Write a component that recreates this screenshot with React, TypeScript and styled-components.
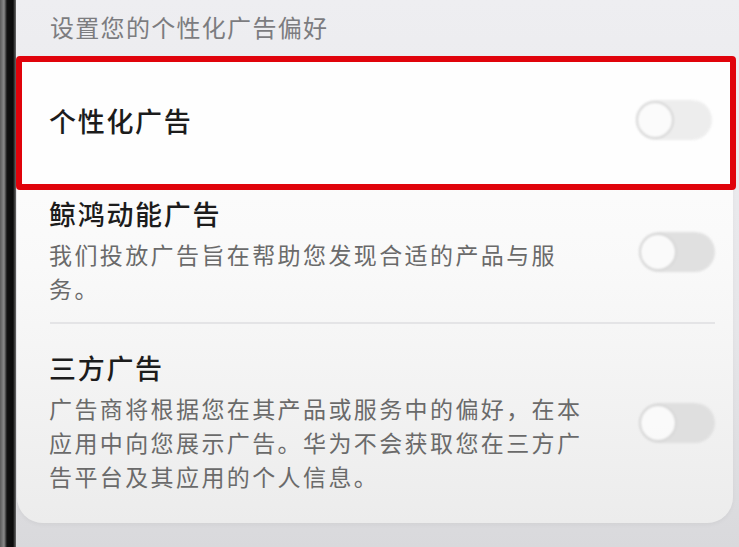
import styled, { createGlobalStyle } from "styled-components";

const GlobalStyle = createGlobalStyle`
  html, body {
    margin: 0;
    padding: 0;
    background: #dadadd;
  }
  body {
    font-family: "Noto Sans CJK SC", "Noto Sans", sans-serif;
  }
`;

type Option = {
  title: string;
  desc?: string;
};

const options: Option[] = [
  { title: "个性化广告" },
  {
    title: "鲸鸿动能广告",
    desc: "我们投放广告旨在帮助您发现合适的产品与服务。",
  },
  {
    title: "三方广告",
    desc: "广告商将根据您在其产品或服务中的偏好，在本应用中向您展示广告。华为不会获取您在三方广告平台及其应用的个人信息。",
  },
];

export default function App() {
  return (
    <>
      <GlobalStyle />
      <Page>
        <Bezel />
        <Screen>
          <Header>设置您的个性化广告偏好</Header>
          <Card>
            <HighlightRow>
              <Texts>
                <Title>{options[0].title}</Title>
              </Texts>
              <Toggle $light />
            </HighlightRow>
            <Row $top={8} $bottom={17}>
              <Texts>
                <Title>{options[1].title}</Title>
                <Desc>{options[1].desc}</Desc>
              </Texts>
              <Toggle />
            </Row>
            <Divider />
            <Row $top={28} $bottom={30}>
              <Texts>
                <Title>{options[2].title}</Title>
                <Desc>{options[2].desc}</Desc>
              </Texts>
              <Toggle />
            </Row>
          </Card>
        </Screen>
      </Page>
    </>
  );
}

const Toggle = ({ $light }: { $light?: boolean }) => (
  <Track $light={$light}>
    <Knob />
  </Track>
);

const Page = styled.div`
  width: 739px;
  height: 547px;
  display: flex;
  overflow: hidden;
`;

const Bezel = styled.div`
  width: 16px;
  flex-shrink: 0;
  background: linear-gradient(
    to right,
    #5a5a5a 0px,
    #8a8a8a 4px,
    #111 7px,
    #0a0a0a 13px,
    #6b6b6b 16px
  );
`;

const Screen = styled.div`
  flex: 1;
  display: flex;
  flex-direction: column;
  background: linear-gradient(to bottom, #eeeef1 0%, #e6e6e9 60%, #d9d9dc 100%);
  padding-right: 6px;
`;

const Header = styled.div`
  height: 56px;
  display: flex;
  align-items: center;
  padding-left: 34px;
  padding-bottom: 4px;
  box-sizing: border-box;
  font-size: 24px;
  color: #7c7c7f;
  letter-spacing: 1.3px;
`;

const Card = styled.div`
  margin-left: 1px;
  border-radius: 6px 6px 26px 26px;
  background: linear-gradient(to bottom, #ffffff 0%, #f9f9f9 45%, #ececec 100%);
  box-shadow: 0 2px 4px rgba(0, 0, 0, 0.04);
`;

const HighlightRow = styled.div`
  margin: 0 -3px 0 -1px;
  height: 134px;
  box-sizing: border-box;
  border: 6px solid #e0030b;
  border-radius: 4px;
  background: #fefefe;
  display: flex;
  align-items: center;
  justify-content: space-between;
  padding: 0 18px 6px 27px;
`;

const Row = styled.div<{ $top: number; $bottom: number }>`
  display: flex;
  align-items: center;
  justify-content: space-between;
  padding: ${(p) => p.$top}px 18px ${(p) => p.$bottom}px 32px;
`;

const Texts = styled.div`
  display: flex;
  flex-direction: column;
  gap: 8px;
`;

const Title = styled.div`
  font-size: 27px;
  line-height: 31px;
  font-weight: 500;
  color: #1c1c1c;
  letter-spacing: 1.7px;
`;

const Desc = styled.div`
  width: 540px;
  font-size: 23px;
  line-height: 34px;
  color: #6a6a6a;
  letter-spacing: 2.4px;
`;

const Divider = styled.div`
  height: 2px;
  margin: 0 18px 0 33px;
  background: #e4e4e6;
`;

const Track = styled.div<{ $light?: boolean }>`
  width: 76px;
  height: 40px;
  border-radius: 20px;
  flex-shrink: 0;
  background: ${(p) => (p.$light ? "#ececec" : "#dedede")};
  display: flex;
  align-items: center;
  filter: blur(0.8px);
  opacity: 0.9;
`;

const Knob = styled.div`
  width: 38px;
  height: 38px;
  border-radius: 50%;
  background: #fbfbfb;
  border: 2px solid #d3d3d3;
  box-sizing: border-box;
`;
